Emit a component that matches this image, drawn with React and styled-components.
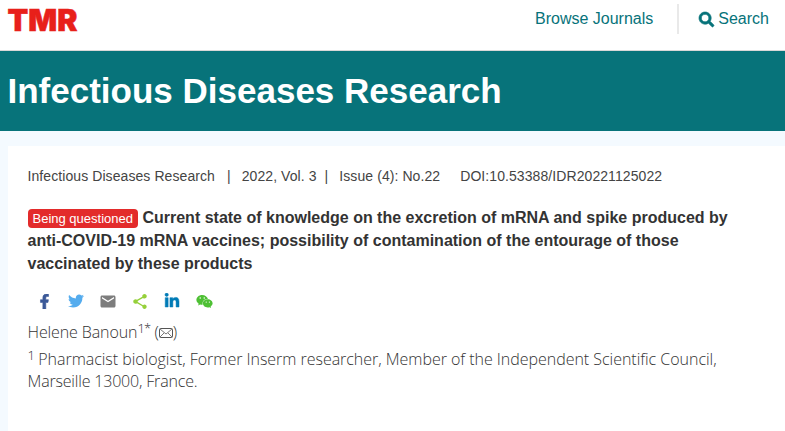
import React from "react";
import styled, { createGlobalStyle } from "styled-components";
import { FaSearch, FaFacebookF, FaTwitter, FaLinkedinIn, FaWeixin } from "react-icons/fa";
import { MdEmail, MdShare } from "react-icons/md";

const GlobalStyle = createGlobalStyle`
  * {
    box-sizing: border-box;
  }

  body {
    margin: 0;
    background: #f4faff;
    color: #333;
    font-family: "Liberation Sans", Arial, sans-serif;
  }
`;

const Header = styled.header`
  display: flex;
  align-items: flex-start;
  justify-content: space-between;
  height: 51px;
  padding: 4px 16px 0 8px;
  background: #fff;
  border-bottom: 1px solid #d8d8d8;
`;

const Logo = styled.svg`
  display: block;
  overflow: visible;
`;

const Nav = styled.nav`
  display: flex;
  align-items: center;
  height: 30px;
  color: #07737a;
  font-size: 16px;
`;

const NavLink = styled.a`
  display: flex;
  align-items: center;
  gap: 4px;
  line-height: 30px;
`;

const SearchIcon = styled(FaSearch)`
  stroke: currentColor;
  stroke-width: 22px;
  overflow: visible;
`;

const Divider = styled.span`
  width: 2px;
  height: 30px;
  margin: 0 20px 0 24px;
  background: #e9e9e9;
`;

const Banner = styled.div`
  height: 80px;
  padding-left: 7.5px;
  background: #07737a;
`;

const JournalName = styled.h1`
  margin: 0;
  color: #fff;
  font-size: 35px;
  line-height: 80px;
`;

const Article = styled.main`
  height: 285px;
  margin: 15px 0 0 8px;
  padding: 20px 20px 0 19.5px;
  background: #fff;
`;

const Meta = styled.div`
  display: flex;
  color: #444;
  font-size: 14px;
  line-height: 20px;
  letter-spacing: ${props => props.spacing || 0}px;
  white-space: pre;
`;

const MetaItem = styled.span`
  margin-right: ${props => props.gap || 0}px;
`;

const Title = styled.h2`
  margin: 20px 0 0;
  font-size: 16px;
  line-height: 23px;
`;

const Tag = styled.span`
  display: inline-block;
  height: 19px;
  padding: 0 5px;
  border-radius: 4px;
  background: #e32b2b;
  color: #fff;
  font-size: 13px;
  font-weight: normal;
  line-height: 19px;
`;

const ShareRow = styled.div`
  display: flex;
  gap: 14px;
  margin: 17px 0 0 7.5px;
`;

const ShareIcon = styled.a`
  display: flex;
  align-items: center;
  justify-content: center;
  width: 18px;
  height: 18px;
  color: ${props => props.color};
`;

const Text = styled.p`
  margin: ${props => props.top || 0}px 0 0;
  color: #333;
  font-family: "Open Sans", "Noto Sans", sans-serif;
  font-size: 16px;
  font-weight: 300;
  line-height: 22px;
  letter-spacing: ${props => props.spacing || 0}px;
`;

const LastLine = styled.span`
  letter-spacing: -0.18px;
`;

const Sup = styled.sup`
  font-size: 13px;
  line-height: 0;
  letter-spacing: -0.8px;
  vertical-align: 5px;
`;

const Envelope = styled.svg`
  vertical-align: 0;
`;

const TmrLogo = () => (
  <Logo width="70" height="36" viewBox="0 0 70 36">
    <text
      x="-0.5"
      y="26.5"
      textLength="70"
      lengthAdjust="spacingAndGlyphs"
      fill="#e8201a"
      stroke="#e8201a"
      strokeWidth="0.5"
      fontFamily="Inter"
      fontWeight="900"
      fontSize="29.5"
    >
      TMR
    </text>
  </Logo>
);

const App = () => (
  <>
    <GlobalStyle />
    <Header>
      <TmrLogo />
      <Nav>
        <NavLink>Browse Journals</NavLink>
        <Divider />
        <NavLink>
          <SearchIcon size={15} />
          Search
        </NavLink>
      </Nav>
    </Header>
    <Banner>
      <JournalName>Infectious Diseases Research</JournalName>
    </Banner>
    <Article>
      <Meta spacing={0.08}>
        <MetaItem gap={12}>Infectious Diseases Research</MetaItem>
        <MetaItem gap={11}>|</MetaItem>
        <MetaItem gap={8}>2022, Vol. 3</MetaItem>
        <MetaItem gap={11}>|</MetaItem>
        <MetaItem gap={20}>Issue (4): No.22</MetaItem>
        <MetaItem>DOI:10.53388/IDR20221125022</MetaItem>
      </Meta>
      <Title>
        <Tag>Being questioned</Tag> Current state of knowledge on the excretion of mRNA and spike
        produced by anti-COVID-19 mRNA vaccines; possibility of contamination of the entourage of
        those vaccinated by these products
      </Title>
      <ShareRow>
        <ShareIcon color="#3b5998">
          <FaFacebookF size={15} stroke="currentColor" strokeWidth={20} />
        </ShareIcon>
        <ShareIcon color="#55acee">
          <FaTwitter size={16} />
        </ShareIcon>
        <ShareIcon color="#7d7d7d">
          <MdEmail size={19} />
        </ShareIcon>
        <ShareIcon color="#95d03a">
          <MdShare size={19} />
        </ShareIcon>
        <ShareIcon color="#007bb6">
          <FaLinkedinIn size={16} stroke="currentColor" strokeWidth={16} />
        </ShareIcon>
        <ShareIcon color="#4ec034">
          <FaWeixin size={17} />
        </ShareIcon>
      </ShareRow>
      <Text top={11} spacing={-0.11}>
        Helene Banoun<Sup>1*</Sup> (
        <Envelope width="14" height="10" viewBox="0 0 14 10" fill="none" stroke="#555">
          <rect x="0.5" y="0.5" width="13" height="9" rx="1" />
          <path d="M1 1l6 5 6-5M1 9l4-4M13 9L9 5" strokeWidth="0.8" />
        </Envelope>
        )
      </Text>
      <Text top={5} spacing={-0.03}>
        <Sup>1</Sup> Pharmacist biologist, Former Inserm researcher, Member of the Independent
        Scientific Council,
        <br />
        <LastLine>Marseille 13000, France.</LastLine>
      </Text>
    </Article>
  </>
);

export default App;
